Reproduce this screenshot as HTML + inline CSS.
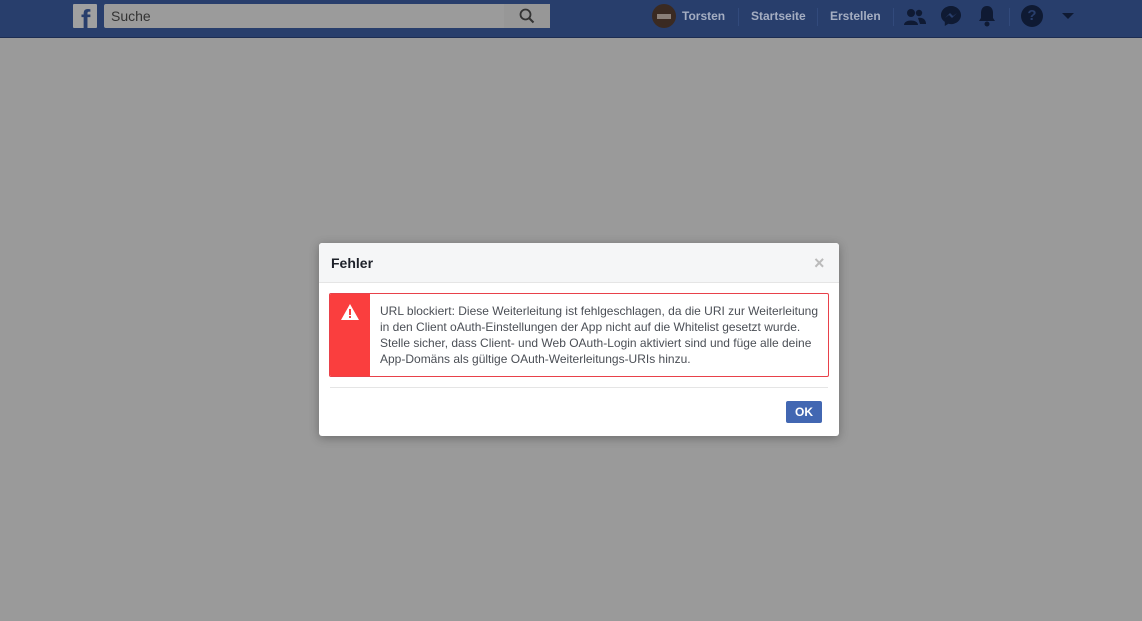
<!DOCTYPE html>
<html><head><meta charset="utf-8"><style>
*{margin:0;padding:0;box-sizing:border-box}
body{width:1142px;height:621px;background:#9a9a9a;font-family:"Liberation Sans",Arial,sans-serif;position:relative;overflow:hidden}
.nav{position:absolute;left:0;top:0;width:1142px;height:38px;background:#283e6c;border-bottom:1px solid #1d2d52}
.abs{position:absolute}
.nt{position:absolute;top:9px;font-size:12px;font-weight:bold;color:#a5aec2}
.sep{position:absolute;top:8px;width:1px;height:18px;background:#324a7c}
.dlg{position:absolute;left:319px;top:243px;width:520px;height:193px;background:#fff;border-radius:3px;box-shadow:0 2px 10px rgba(0,0,0,.3)}
.hd{height:40px;background:#f5f6f7;border-bottom:1px solid #e5e5e5;border-radius:3px 3px 0 0;padding:12px 12px;font-size:14px;font-weight:bold;color:#1d2129}
.err{position:absolute;left:10px;top:50px;width:500px;height:84px;border:1px solid #e8414a;border-radius:2px;overflow:hidden}
.red{position:absolute;left:0;top:0;width:40px;height:84px;background:#fa3e3e}
.txt{position:absolute;left:50px;top:9px;font-size:12px;line-height:16px;color:#4b4f56;width:450px}
.ok{position:absolute;left:467px;top:158px;width:36px;height:22px;background:#4267b2;border:1px solid #4267b2;border-radius:2px;color:#fff;font-size:12px;font-weight:bold;text-align:center;line-height:20px}
</style></head><body>
<div class="nav">
 <div class="abs" style="left:73px;top:4px;width:24px;height:24px;background:#a0a0a0;border-radius:1px;overflow:hidden">
  <div class="abs" style="left:8px;top:2px;font-size:28px;font-weight:bold;color:#283e6c;line-height:28px">f</div>
 </div>
 <div class="abs" style="left:104px;top:4px;width:446px;height:24px;background:#9b9b9b;border-radius:2px">
  <div class="abs" style="left:7px;top:4px;font-size:14px;color:#333">Suche</div>
  <div class="abs" style="right:0;top:0;width:46px;height:24px;background:#979797"></div>
  <svg class="abs" style="left:415px;top:4px" width="16" height="16" viewBox="0 0 16 16"><circle cx="6.5" cy="6.5" r="5" fill="none" stroke="#333" stroke-width="1.8"/><path d="M10 10l4.5 4.5" stroke="#333" stroke-width="2"/></svg>
 </div>
 <div class="abs" style="left:652px;top:4px;width:24px;height:24px;border-radius:50%;background:#3a2a22"><div class="abs" style="left:5px;top:10px;width:14px;height:5px;background:#8a7f78"></div></div>
 <div class="nt" style="left:682px">Torsten</div>
 <div class="sep" style="left:738px"></div>
 <div class="nt" style="left:751px">Startseite</div>
 <div class="sep" style="left:817px"></div>
 <div class="nt" style="left:830px">Erstellen</div>
 <div class="sep" style="left:893px"></div>
 <svg class="abs" style="left:904px;top:7px" width="22" height="20" viewBox="0 0 22 20"><circle cx="7" cy="6" r="4" fill="#0f1a33"/><path d="M0 18c0-6 14-6 14 0z" fill="#0f1a33"/><circle cx="15" cy="6" r="3.2" fill="#0f1a33"/><path d="M14 11c5-1 8 2 8 6h-6z" fill="#0f1a33"/></svg>
 <svg class="abs" style="left:940px;top:5px" width="22" height="22" viewBox="0 0 22 22"><path d="M11 1C5.5 1 1 5 1 10c0 3 1.5 5.3 3.8 6.8V21l3.6-2.2c.8.2 1.7.3 2.6.3 5.5 0 10-4 10-9S16.5 1 11 1z" fill="#0f1a33"/><path d="M5 13l5-5 3 3 4-3-5 5-3-3z" fill="#283e6c"/></svg>
 <svg class="abs" style="left:977px;top:5px" width="20" height="22" viewBox="0 0 20 22"><path d="M10 1c-4 0-6 3-6 7v5l-2 3h16l-2-3V8c0-4-2-7-6-7z" fill="#0f1a33"/><circle cx="10" cy="19" r="2.5" fill="#0f1a33"/></svg>
 <div class="sep" style="left:1009px"></div>
 <div class="abs" style="left:1021px;top:5px;width:22px;height:22px;border-radius:50%;background:#0f1a33;color:#283e6c;font-weight:bold;font-size:15px;text-align:center;line-height:22px">?</div>
 <div class="abs" style="left:1062px;top:13px;width:0;height:0;border-left:6px solid transparent;border-right:6px solid transparent;border-top:6px solid #0f1a33"></div>
</div>
<div class="dlg">
 <div class="hd">Fehler</div>
 <div class="abs" style="left:495px;top:10px;font-size:18px;color:#bbb;font-weight:bold">×</div>
 <div class="err">
  <div class="red"><svg class="abs" style="left:11px;top:10px" width="18" height="16" viewBox="0 0 18 16"><path d="M9 0L18 16H0z" fill="#fff"/><rect x="8" y="5" width="2" height="6" fill="#fa3e3e"/><rect x="8" y="12" width="2" height="2" fill="#fa3e3e"/></svg></div>
  <div class="txt">URL blockiert: Diese Weiterleitung ist fehlgeschlagen, da die URI zur Weiterleitung in den Client oAuth-Einstellungen der App nicht auf die Whitelist gesetzt wurde. Stelle sicher, dass Client- und Web OAuth-Login aktiviert sind und füge alle deine App-Domäns als gültige OAuth-Weiterleitungs-URIs hinzu.</div>
 </div>
 <div class="abs" style="left:11px;top:144px;width:498px;height:1px;background:#e5e5e5"></div>
 <div class="ok">OK</div>
</div>
</body></html>
